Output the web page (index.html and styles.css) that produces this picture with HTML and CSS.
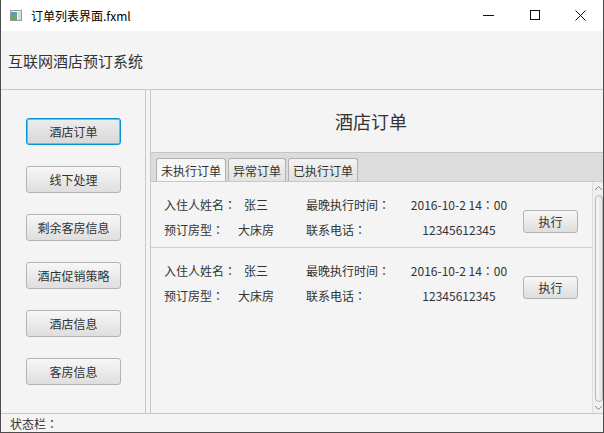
FILE: index.html
```html
<!DOCTYPE html>
<html>
<head>
<meta charset="utf-8">
<link rel="stylesheet" href="styles.css">
</head>
<body>
<div class="window">
  <div class="titlebar">
    <svg class="appicon" width="12" height="11" viewBox="0 0 12 11">
      <rect x="0.5" y="0.5" width="11" height="10" fill="#f4f4f4" stroke="#9a9a9a"/>
      <rect x="1" y="2" width="6" height="8" fill="#5a9fb0"/>
      <rect x="1" y="6" width="6" height="4" fill="#6aa86a"/>
      <rect x="8" y="2" width="3" height="8" fill="#d8d8d8"/>
    </svg>
    <span class="title">订单列表界面.fxml</span>
    <div class="controls">
      <span class="ctl"><svg width="11" height="11" viewBox="0 0 11 11"><line x1="0" y1="5.5" x2="11" y2="5.5" stroke="#111" stroke-width="1"/></svg></span>
      <span class="ctl"><svg width="11" height="11" viewBox="0 0 11 11"><rect x="1.5" y="0.5" width="9" height="9" fill="none" stroke="#111" stroke-width="1"/></svg></span>
      <span class="ctl"><svg width="11" height="11" viewBox="0 0 11 11"><path d="M0.5 0.5 L10.5 10.5 M10.5 0.5 L0.5 10.5" stroke="#111" stroke-width="1"/></svg></span>
    </div>
  </div>
  <div class="app">
    <div class="header">互联网酒店预订系统</div>
    <div class="main">
      <div class="sidebar">
        <button class="btn side focused">酒店订单</button>
        <button class="btn side">线下处理</button>
        <button class="btn side">剩余客房信息</button>
        <button class="btn side">酒店促销策略</button>
        <button class="btn side">酒店信息</button>
        <button class="btn side">客房信息</button>
      </div>
      <div class="divider"></div>
      <div class="content">
        <div class="page-title">酒店订单</div>
        <div class="tabpane">
          <div class="tabs">
            <span class="tab active">未执行订单</span>
            <span class="tab">异常订单</span>
            <span class="tab">已执行订单</span>
          </div>
          <div class="tabbody">
            <div class="list">
              <div class="order">
                <div class="grid">
                  <span class="lbl">入住人姓名<span class="colon">：</span></span><span class="val">张三</span>
                  <span class="lbl2">最晚执行时间<span class="colon">：</span></span><span class="val">2016-10-2 14<span class="colon">：</span>00</span>
                  <span class="lbl">预订房型<span class="colon">：</span></span><span class="val">大床房</span>
                  <span class="lbl2">联系电话<span class="colon">：</span></span><span class="val">12345612345</span>
                </div>
                <button class="btn exec">执行</button>
              </div>
              <div class="order">
                <div class="grid">
                  <span class="lbl">入住人姓名<span class="colon">：</span></span><span class="val">张三</span>
                  <span class="lbl2">最晚执行时间<span class="colon">：</span></span><span class="val">2016-10-2 14<span class="colon">：</span>00</span>
                  <span class="lbl">预订房型<span class="colon">：</span></span><span class="val">大床房</span>
                  <span class="lbl2">联系电话<span class="colon">：</span></span><span class="val">12345612345</span>
                </div>
                <button class="btn exec">执行</button>
              </div>
            </div>
            <div class="scrollbar">
              <svg class="arrow" width="9" height="6" viewBox="0 0 9 6"><path d="M1 5 L4.5 1.5 L8 5" fill="none" stroke="#8a8a8a" stroke-width="1"/></svg>
              <div class="thumb"></div>
              <svg class="arrow" width="9" height="6" viewBox="0 0 9 6"><path d="M1 1 L4.5 4.5 L8 1" fill="none" stroke="#8a8a8a" stroke-width="1"/></svg>
            </div>
          </div>
        </div>
      </div>
    </div>
    <div class="status">状态栏<span class="colon">：</span></div>
  </div>
</div>
</body>
</html>
```

FILE: styles.css
```css
* { box-sizing: border-box; }
html, body { margin: 0; padding: 0; }
body {
  width: 604px;
  height: 433px;
  overflow: hidden;
  font-family: "Noto Sans CJK SC", "Noto Sans", sans-serif;
  font-size: 12px;
  color: #333;
  background: #fff;
}
.window {
  width: 604px;
  height: 433px;
  display: flex;
  flex-direction: column;
  border-left: 1px solid #4c4c4c;
  border-right: 1px solid #4c4c4c;
  border-bottom: 1px solid #4c4c4c;
}
.titlebar {
  height: 31px;
  flex: none;
  background: #fff;
  display: flex;
  align-items: center;
}
.appicon { margin-left: 9px; margin-top: -1px; }
.title {
  margin-left: 9px;
  font-size: 12px;
  color: #000;
  line-height: 16px;
}
.controls {
  margin-left: auto;
  display: flex;
  height: 31px;
}
.ctl {
  width: 46px;
  height: 31px;
  display: flex;
  align-items: center;
  justify-content: center;
}
.app {
  flex: 1;
  background: #f4f4f4;
  display: flex;
  flex-direction: column;
  min-height: 0;
}
.header {
  height: 59px;
  flex: none;
  border-bottom: 1px solid #c8c8c8;
  padding-left: 7px;
  display: flex;
  align-items: center;
  font-size: 15px;
  color: #333;
  padding-top: 1px;
}
.main {
  flex: 1;
  display: flex;
  min-height: 0;
}
.sidebar {
  width: 144px;
  flex: none;
  display: flex;
  flex-direction: column;
  align-items: flex-start;
  padding-top: 28px;
  padding-left: 25px;
  gap: 21px;
}
.btn {
  font-family: "Noto Sans CJK SC", "Noto Sans", sans-serif;
  font-size: 12px;
  color: #333;
  border: 1px solid #b3b3b3;
  border-radius: 3px;
  background: linear-gradient(#f7f7f7, #dedede);
  padding: 0;
  margin: 0;
  line-height: 1;
}
.side {
  width: 95px;
  height: 27px;
}
.side.focused {
  border: 1px solid #0596d1;
  box-shadow: inset 0 0 0 1px #62c1e6;
  background: linear-gradient(#ececec, #d8d8d8);
}
.divider {
  width: 6px;
  flex: none;
  border-left: 1px solid #c8c8c8;
  border-right: 1px solid #c8c8c8;
  background: #f4f4f4;
}
.content {
  flex: 1;
  display: flex;
  flex-direction: column;
  min-width: 0;
}
.page-title {
  height: 62px;
  flex: none;
  display: flex;
  align-items: center;
  justify-content: center;
  padding-right: 12px;
  font-size: 18px;
  color: #333;
}
.tabpane {
  flex: 1;
  display: flex;
  flex-direction: column;
  min-height: 0;
}
.tabs {
  height: 30px;
  flex: none;
  border-top: 1px solid #c4c4c4;
  border-bottom: 1px solid #c8c8c8;
  background: #dcdcdc;
  display: flex;
  align-items: flex-end;
  padding-left: 5px;
  gap: 2px;
}
.tab {
  height: 23px;
  padding: 0 4px;
  border: 1px solid #b0b0b0;
  border-bottom: none;
  border-radius: 3px 3px 0 0;
  background: linear-gradient(#f3f3f3, #e1e1e1);
  display: flex;
  align-items: center;
  font-size: 12px;
  color: #333;
}
.tab.active {
  background: #f6f6f6;
}
.tabbody {
  flex: 1;
  display: flex;
  min-height: 0;
}
.list {
  flex: 1;
  min-width: 0;
}
.order {
  height: 66px;
  border-bottom: 1px solid #cfcfcf;
  display: flex;
  align-items: flex-start;
  padding-left: 13px;
}
.order:last-child { border-bottom: none; }
.grid {
  display: grid;
  grid-template-columns: 62px 60px 114px 118px;
  grid-auto-rows: 25px;
  padding-top: 10px;
  align-items: center;
}
.colon { font-family: "Noto Sans CJK TC", "Noto Sans CJK SC", sans-serif; }
.lbl { white-space: nowrap; }
.lbl2 { padding-left: 20px; white-space: nowrap; }
.val { text-align: center; white-space: nowrap; }
.exec {
  width: 55px;
  height: 23px;
  margin-left: 5px;
  margin-top: 28px;
}
.scrollbar {
  width: 11px;
  flex: none;
  border-left: 1px solid #dedede;
  background: #f0f0f0;
  display: flex;
  flex-direction: column;
  align-items: center;
  padding: 2px 0;
}
.arrow { flex: none; margin-top: 1px; }
.thumb {
  flex: 1;
  width: 8px;
  margin: 4px 0 2px 1px;
  border: 1px solid #b5b5b5;
  border-radius: 4px;
  background: linear-gradient(90deg, #f6f6f6, #e4e4e4);
}
.status {
  height: 19px;
  flex: none;
  border-top: 1px solid #c8c8c8;
  padding-left: 9px;
  display: flex;
  align-items: center;
  font-size: 12px;
  color: #333;
}
```
